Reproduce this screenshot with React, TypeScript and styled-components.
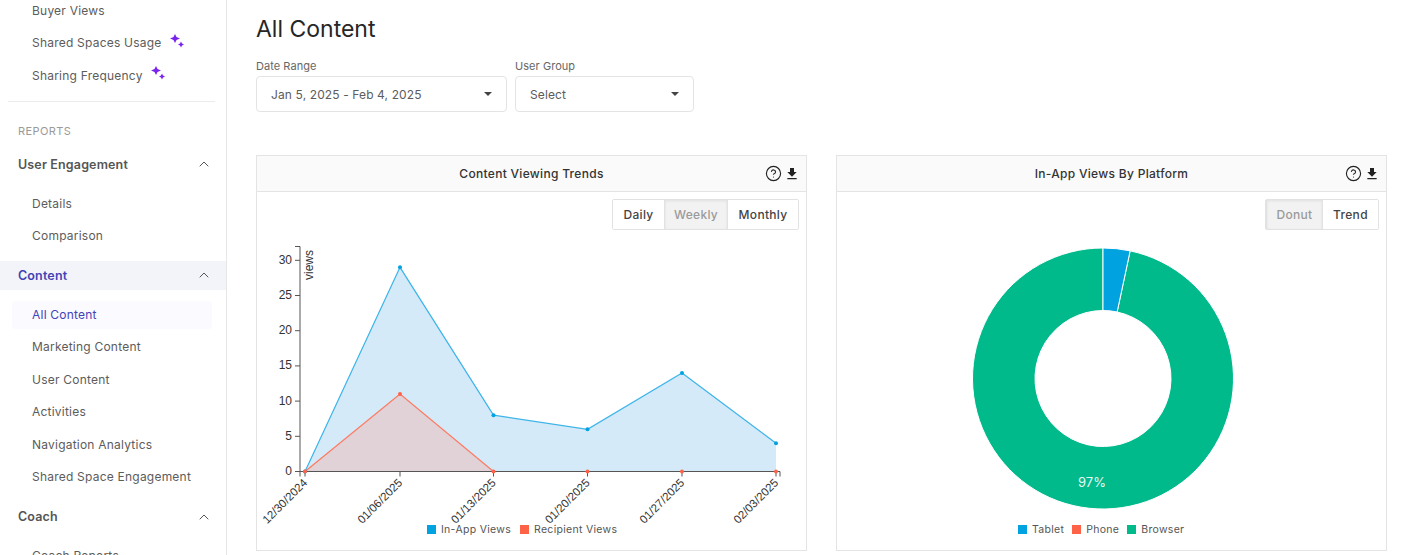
import React from 'react'
import styled, { createGlobalStyle } from 'styled-components'
import { ChevronUp, CircleHelp } from 'lucide-react'
import { MdFileDownload } from 'react-icons/md'

const GlobalStyle = createGlobalStyle`
  html, body { margin: 0; height: 100%; background: #fff; }
  body { font-family: Inter, "Noto Sans", sans-serif; color: #333; overflow: hidden; }
  #root { height: 100%; }
`

const Page = styled.div`
  display: flex;
  width: 1410px;
  height: 555px;
  overflow: hidden;
`

const Sidebar = styled.nav`
  flex: 0 0 226px;
  border-right: 1px solid #e6e6e6;
  margin-top: -6px;
  height: 640px;
`

const SubItem = styled.a<{ $active?: boolean }>`
  display: flex;
  align-items: center;
  height: ${p => (p.$active ? '28px' : '32.5px')};
  margin: ${p => (p.$active ? '11px 14px 2px 12px' : '0')};
  padding-left: ${p => (p.$active ? '20px' : '32px')};
  border-radius: 4px;
  background: ${p => (p.$active ? '#fafaff' : 'transparent')};
  color: ${p => (p.$active ? '#4442b5' : '#5c5c5c')};
  font-size: 12px;
  letter-spacing: 0.22px;
`

const Divider = styled.hr`
  margin: 9px 11px 0 8px;
  border: 0;
  border-top: 1px solid #ececec;
`

const SectionLabel = styled.div`
  margin: 22px 0 0 18px;
  height: 14px;
  line-height: 14px;
  font-size: 11px;
  letter-spacing: 0.4px;
  color: #9a9a9a;
`

const GroupHeader = styled.div<{ $active?: boolean; $gap?: number }>`
  display: flex;
  align-items: center;
  justify-content: space-between;
  height: 29px;
  margin-top: ${p => p.$gap ?? 0}px;
  margin-bottom: 8.5px;
  padding: 0 14px 0 18px;
  background: ${p => (p.$active ? '#f3f4f9' : 'transparent')};
  color: ${p => (p.$active ? '#4442b5' : '#555')};
  font-size: 12.5px;
  font-weight: 600;
  letter-spacing: 0.15px;
  svg { color: #555; }
`

const Sparkle = styled.svg`
  width: 15px;
  height: 15px;
  margin: -3px 0 0 8px;
  color: #7a22ee;
`

const Main = styled.main`
  flex: 1;
  padding: 0 23px 0 29px;
`

const Title = styled.h1`
  margin: 0;
  padding-top: 15px;
  height: 41px;
  line-height: 28px;
  font-size: 23px;
  font-weight: 400;
  color: #262626;
`

const Filters = styled.div`
  display: flex;
  gap: 8px;
  margin-top: 3px;
`

const Filter = styled.div<{ $width: number }>`
  width: ${p => p.$width}px;
`

const FilterLabel = styled.label`
  display: block;
  height: 15px;
  line-height: 15px;
  margin-bottom: 2px;
  font-size: 11px;
  letter-spacing: 0.05px;
  color: #666;
`

const SelectBox = styled.div`
  display: flex;
  align-items: center;
  justify-content: space-between;
  box-sizing: border-box;
  height: 36px;
  padding: 0 14px;
  border: 1px solid #e4e4e4;
  border-radius: 4px;
  font-size: 12px;
  letter-spacing: 0.12px;
  color: #5c5c5c;
`

const Caret = styled.span`
  width: 0;
  height: 0;
  border-left: 4px solid transparent;
  border-right: 4px solid transparent;
  border-top: 4px solid #444;
`

const Cards = styled.div`
  display: grid;
  grid-template-columns: 551px 551px;
  gap: 29px;
  margin-top: 43px;
`

const Card = styled.section`
  box-sizing: border-box;
  height: 396px;
  border: 1px solid #e4e4e4;
  display: flex;
  flex-direction: column;
`

const CardHeader = styled.header`
  position: relative;
  display: flex;
  align-items: center;
  justify-content: center;
  flex: 0 0 36px;
  box-sizing: border-box;
  background: #fafafa;
  border-bottom: 1px solid #e4e4e4;
  font-size: 12px;
  font-weight: 500;
  letter-spacing: 0.3px;
  color: #333;
`

const CardActions = styled.div`
  position: absolute;
  right: 6px;
  top: 9px;
  display: flex;
  align-items: center;
  gap: 2px;
  color: #222;
`

const CardBody = styled.div`
  position: relative;
  flex: 1;
  min-height: 0;
`

const Toggle = styled.div`
  position: absolute;
  top: 7px;
  right: 7px;
  display: flex;
  height: 31px;
  border: 1px solid #e2e2e2;
  border-radius: 2px;
  box-sizing: border-box;
`

const ToggleButton = styled.button<{ $active?: boolean; $width: number }>`
  width: ${p => p.$width}px;
  padding: 0;
  border: 0;
  border-left: ${p => (p.$active ? '1px solid #e2e2e2' : '0')};
  border-right: ${p => (p.$active ? '1px solid #e2e2e2' : '0')};
  background: ${p => (p.$active ? '#f2f2f2' : '#fff')};
  box-shadow: ${p => (p.$active ? 'inset 0 1px 3px rgba(0,0,0,.08)' : 'none')};
  color: ${p => (p.$active ? '#9a9a9a' : '#444')};
  font: 500 12px Inter, sans-serif;
  letter-spacing: 0.3px;
`

const ChartSvg = styled.svg`
  display: block;
  position: absolute;
  left: 0;
  top: 0;
  overflow: visible;
`

const AxisText = styled.text`
  font-family: "Liberation Sans", Arial, sans-serif;
  font-size: 12px;
  fill: #333;
`

const DateLabel = styled(AxisText)`
  font-size: 11.5px;
`

const Legend = styled.div<{ $left: number }>`
  position: absolute;
  left: ${p => p.$left}px;
  top: 330px;
  display: flex;
  align-items: center;
  height: 14px;
  font-size: 10.5px;
  letter-spacing: 0.3px;
  color: #555;
`

const LegendItem = styled.span<{ $color: string; $gap: number }>`
  display: flex;
  align-items: center;
  margin-right: ${p => p.$gap}px;
  &::before {
    content: '';
    width: 9px;
    height: 9px;
    margin-right: 5px;
    background: ${p => p.$color};
  }
`

const BLUE = '#00a3e0'
const RED = '#ff6347'
const GREEN = '#00ba8b'

const Stars = () => (
  <Sparkle viewBox="0 0 15 15">
    <path fill="currentColor" d="M5 0 L6.5 3 L10 4.5 L6.5 6 L5 9 L3.5 6 L0 4.5 L3.5 3Z M11 7.5 L12 9.5 L14 10.5 L12 11.5 L11 13.5 L10 11.5 L8 10.5 L10 9.5Z" />
  </Sparkle>
)

const Group = ({ label, active, gap }: { label: string; active?: boolean; gap?: number }) => (
  <GroupHeader $active={active} $gap={gap}>
    {label}
    <ChevronUp size={16} strokeWidth={1.5} />
  </GroupHeader>
)

const Actions = () => (
  <CardActions>
    <CircleHelp size={17} strokeWidth={1.6} />
    <MdFileDownload size={16} />
  </CardActions>
)

// chart origin inside the card body (page coords minus 257,192)
const xs = [48, 143, 236.5, 330.5, 425, 519]
const Y0 = 279.5
const UNIT = 7.04
const inApp = [0, 29, 8, 6, 14, 4]
const recipient = [0, 11, 0, 0, 0, 0]
const dates = ['12/30/2024', '01/06/2025', '01/13/2025', '01/20/2025', '01/27/2025', '02/03/2025']

const line = (vals: number[]) => vals.map((v, i) => `${xs[i]},${Y0 - v * UNIT}`).join(' ')
const area = (vals: number[]) => `${xs[0]},${Y0} ${line(vals)} ${xs[5]},${Y0}`

const TrendChart = () => (
  <ChartSvg width="549" height="340" viewBox="0 0 549 340">
    <polygon points={area(inApp)} fill="#d4eaf8" />
    <polygon points={area(recipient)} fill="#e0d2d6" />
    <polyline points={line(inApp)} fill="none" stroke="#3db4ea" strokeWidth="1.2" />
    <polyline points={line(recipient).split(' ').slice(0, 3).join(' ')} fill="none" stroke="#ff7a62" strokeWidth="1.2" />
    <path d="M38 54.5 H43 V284.5 M38 279.5 H523 V284.5" fill="none" stroke="#555" strokeWidth="1" />
    {[0, 5, 10, 15, 20, 25, 30].map(v => (
      <g key={v}>
        <line x1="38" x2="43" y1={Y0 - v * UNIT} y2={Y0 - v * UNIT} stroke="#555" />
        <AxisText x="35" y={Y0 - v * UNIT + 3.5} textAnchor="end">{v}</AxisText>
      </g>
    ))}
    <AxisText transform="translate(56 88) rotate(-90)">views</AxisText>
    {xs.map((x, i) => (
      <g key={dates[i]}>
        <line x1={x} x2={x} y1={Y0} y2={Y0 + 5} stroke="#555" />
        <circle cx={x} cy={Y0 - inApp[i] * UNIT} r="2" fill={BLUE} />
        <circle cx={x} cy={Y0 - recipient[i] * UNIT} r="2" fill={RED} />
        <DateLabel transform={`translate(${x + 3} ${Y0 + 12}) rotate(-45)`} textAnchor="end">{dates[i]}</DateLabel>
      </g>
    ))}
  </ChartSvg>
)

const ring = (from: number, to: number) => {
  const R = 130.5
  const r = 68
  const pt = (rad: number, a: number) => `${266 + rad * Math.sin(a)} ${186.5 - rad * Math.cos(a)}`
  const large = to - from > Math.PI ? 1 : 0
  return `M${pt(R, from)} A${R} ${R} 0 ${large} 1 ${pt(R, to)} L${pt(r, to)} A${r} ${r} 0 ${large} 0 ${pt(r, from)}Z`
}

const DonutChart = () => {
  const split = (12 * Math.PI) / 180
  return (
    <ChartSvg width="549" height="340" viewBox="0 0 549 340">
      <path d={ring(split, Math.PI * 2)} fill={GREEN} stroke="#fff" strokeWidth="1" />
      <path d={ring(0, split)} fill={BLUE} stroke="#fff" strokeWidth="1" />
      <text x="255" y="295" textAnchor="middle" fill="#e8f8f3" fontFamily="Inter, sans-serif" fontSize="13">97%</text>
    </ChartSvg>
  )
}

const App = () => (
  <Page>
    <GlobalStyle />
    <Sidebar>
      <SubItem>Buyer Views</SubItem>
      <SubItem>Shared Spaces Usage<Stars /></SubItem>
      <SubItem>Sharing Frequency<Stars /></SubItem>
      <Divider />
      <SectionLabel>REPORTS</SectionLabel>
      <Group label="User Engagement" gap={12} />
      <SubItem>Details</SubItem>
      <SubItem>Comparison</SubItem>
      <Group label="Content" active gap={8.5} />
      <SubItem $active>All Content</SubItem>
      <SubItem>Marketing Content</SubItem>
      <SubItem>User Content</SubItem>
      <SubItem>Activities</SubItem>
      <SubItem>Navigation Analytics</SubItem>
      <SubItem>Shared Space Engagement</SubItem>
      <Group label="Coach" gap={9} />
      <SubItem>Coach Reports</SubItem>
    </Sidebar>
    <Main>
      <Title>All Content</Title>
      <Filters>
        <Filter $width={251}>
          <FilterLabel>Date Range</FilterLabel>
          <SelectBox>Jan 5, 2025 - Feb 4, 2025<Caret /></SelectBox>
        </Filter>
        <Filter $width={179}>
          <FilterLabel>User Group</FilterLabel>
          <SelectBox>Select<Caret /></SelectBox>
        </Filter>
      </Filters>
      <Cards>
        <Card>
          <CardHeader>Content Viewing Trends<Actions /></CardHeader>
          <CardBody>
            <TrendChart />
            <Toggle>
              <ToggleButton $width={51}>Daily</ToggleButton>
              <ToggleButton $width={64} $active>Weekly</ToggleButton>
              <ToggleButton $width={70}>Monthly</ToggleButton>
            </Toggle>
            <Legend $left={170}>
              <LegendItem $color={BLUE} $gap={9}>In-App Views</LegendItem>
              <LegendItem $color={RED} $gap={0}>Recipient Views</LegendItem>
            </Legend>
          </CardBody>
        </Card>
        <Card>
          <CardHeader>In-App Views By Platform<Actions /></CardHeader>
          <CardBody>
            <DonutChart />
            <Toggle>
              <ToggleButton $width={57} $active>Donut</ToggleButton>
              <ToggleButton $width={55}>Trend</ToggleButton>
            </Toggle>
            <Legend $left={181}>
              <LegendItem $color={BLUE} $gap={8}>Tablet</LegendItem>
              <LegendItem $color={RED} $gap={8}>Phone</LegendItem>
              <LegendItem $color={GREEN} $gap={0}>Browser</LegendItem>
            </Legend>
          </CardBody>
        </Card>
      </Cards>
    </Main>
  </Page>
)

export default App
